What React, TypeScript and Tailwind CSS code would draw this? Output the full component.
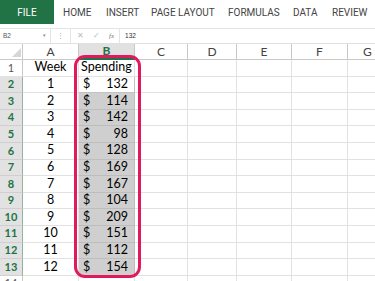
import React from "react";

const cols = [
  { l: "C", w: 53 },
  { l: "D", w: 49 },
  { l: "E", w: 55 },
  { l: "F", w: 56 },
  { l: "G", w: 40 },
];

const spend = [132, 114, 142, 98, 128, 169, 167, 104, 209, 151, 112, 154];

function Row({ n, a, b, sel, active }: { n: number; a?: React.ReactNode; b?: React.ReactNode; sel?: boolean; active?: boolean }) {
  return (
    <div className="flex h-[16.6px] shrink-0">
      <div
        className={
          "w-[23px] shrink-0 flex items-center justify-center text-[11px] border-b border-r " +
          (sel
            ? "bg-[#e2e2e2] text-[#217346] font-bold border-b-[#cfcfcf] border-r-[#8fb59c]"
            : "bg-white text-[#555] border-b-[#e2e2e2] border-r-[#c9c9c9]")
        }
      >
        {n}
      </div>
      <div className="w-[56px] shrink-0 flex items-center justify-center text-[12.5px] text-black border-b border-r border-[#e2e2e2]">
        {a}
      </div>
      <div
        className={
          "w-[56px] shrink-0 flex items-center text-[12.5px] text-black border-b border-r " +
          (sel ? (active ? "bg-white border-[#c2c2c2]" : "bg-[#cfcfcf] border-[#bdbdbd]") : "border-[#e2e2e2]")
        }
      >
        {b}
      </div>
      {cols.map((c) => (
        <div key={c.l} style={{ width: c.w }} className="shrink-0 border-b border-r border-[#e2e2e2]" />
      ))}
    </div>
  );
}

export default function App() {
  return (
    <div className="w-[375px] h-[281px] overflow-hidden bg-white relative font-['Lato','Liberation_Sans',sans-serif]">
      {/* Ribbon tabs */}
      <div className="flex h-[24px] items-center font-['Roboto',sans-serif] text-[10px] text-[#444]">
        <div className="w-[54px] h-[24px] bg-[#217346] text-white flex items-center justify-center">FILE</div>
        <span className="ml-[9px] w-[43px]">HOME</span>
        <span className="w-[45px]">INSERT</span>
        <span className="w-[77px]">PAGE LAYOUT</span>
        <span className="w-[65px]">FORMULAS</span>
        <span className="w-[39px]">DATA</span>
        <span>REVIEW</span>
      </div>
      {/* Formula bar */}
      <div className="mt-[4px] h-[15px] border-t border-[#e4e4e4] flex items-center font-['Liberation_Sans',sans-serif] text-[6.5px] text-[#555]">
        <div className="w-[51px] h-full flex items-center justify-between pl-[3px] pr-[4px] border-r border-[#e4e4e4]">
          <span>B2</span>
          <span className="text-[5px] text-[#888]">▾</span>
        </div>
        <span className="ml-[6px] text-[#aaa] text-[7px]">⋮</span>
        <div className="ml-[6px] h-full flex-1 flex items-center border-l border-[#e4e4e4]">
          <span className="ml-[6px] text-[#bbb] text-[8px]">✕</span>
          <span className="ml-[9px] text-[#bbb] text-[8px]">✓</span>
          <span className="ml-[9px] italic font-['Liberation_Serif',serif] text-[#777] text-[7px]">fx</span>
          <div className="ml-[5px] h-full border-l border-[#e4e4e4]" />
          <span className="ml-[5px] text-[#333]">132</span>
        </div>
      </div>
      {/* Column headers */}
      <div className="flex h-[17px] border-t border-[#e0e0e0] text-[12px] text-[#444]">
        <div className="w-[23px] shrink-0 relative border-r border-b border-[#c9c9c9] bg-white">
          <div className="absolute right-[1px] bottom-[2px] w-0 h-0 border-l-[9px] border-l-transparent border-b-[9px] border-b-[#d6d6d6]" />
        </div>
        <div className="w-[56px] shrink-0 flex items-center justify-center border-r border-b border-[#c9c9c9]">A</div>
        <div className="w-[56px] shrink-0 flex items-center justify-center bg-[#e1e1e1] text-[#217346] font-bold border-r border-[#c9c9c9] border-b-2 border-b-[#217346]">B</div>
        {cols.map((c) => (
          <div key={c.l} style={{ width: c.w }} className="shrink-0 flex items-center justify-center border-r border-b border-[#c9c9c9]">
            {c.l}
          </div>
        ))}
      </div>
      {/* Rows */}
      <div className="flex flex-col">
        <Row n={1} a="Week" b={<span className="pl-[2px]">Spending</span>} />
        {spend.map((v, i) => (
          <Row
            key={i}
            n={i + 2}
            a={i + 1}
            sel
            active={i === 0}
            b={
              <div className="flex w-full justify-between pl-[4px] pr-[6px]">
                <span>$</span>
                <span>{v}</span>
              </div>
            }
          />
        ))}
        <Row n={14} />
      </div>
      {/* Highlight */}
      <div className="absolute left-[74px] top-[55px] w-[67px] h-[223px] rounded-[11px] border-[3.5px] border-[#e1195f] pointer-events-none" />
    </div>
  );
}
